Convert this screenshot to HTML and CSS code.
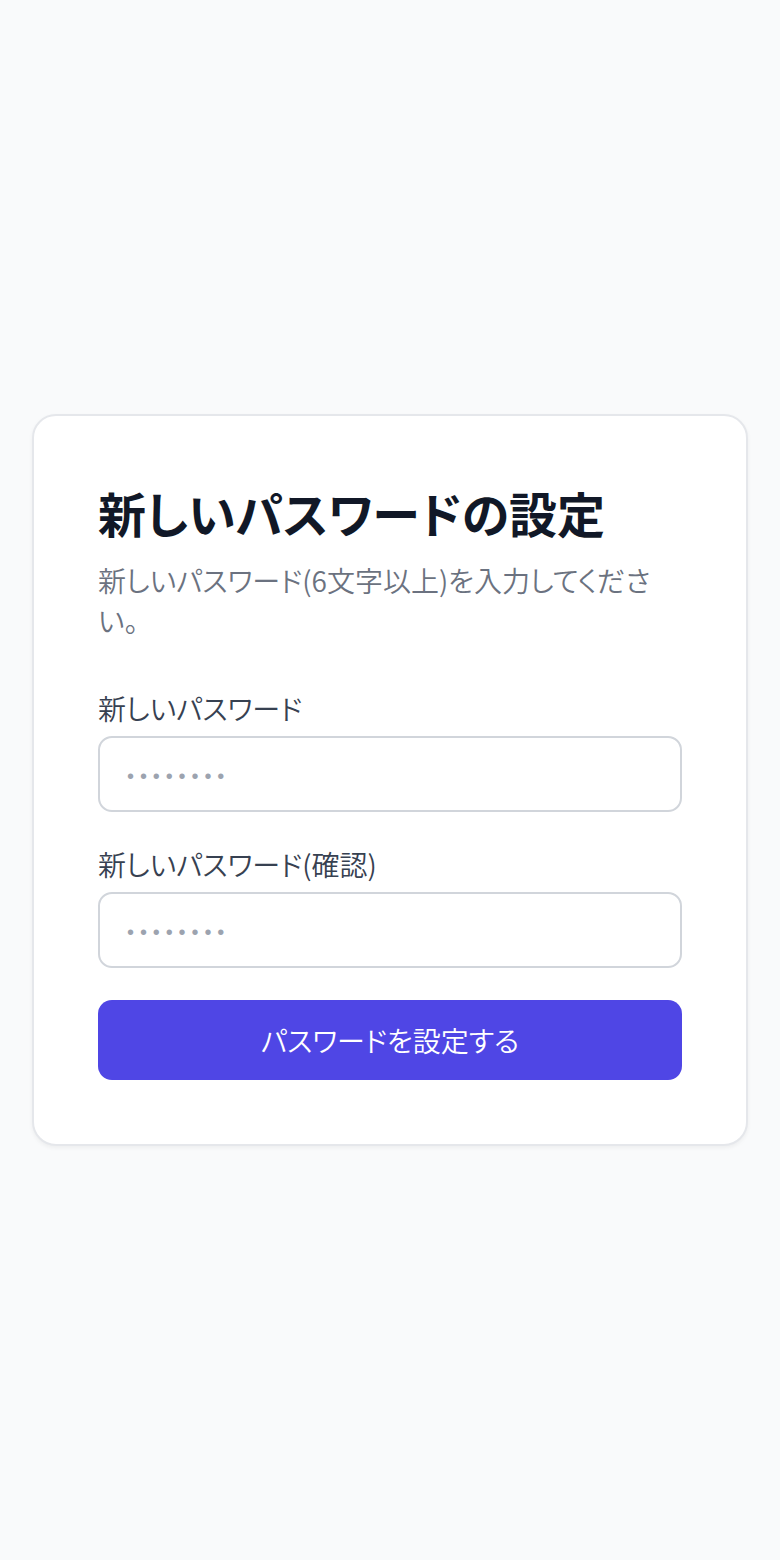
FILE: index.html
```html
<!DOCTYPE html>
<html lang="ja">
<head>
	<meta charset="utf-8">
	<title>新しいパスワードの設定</title>
	<link rel="stylesheet" href="styles.css">
</head>
<body>
<div class="page">
	<div class="card">
		<h1 class="title">新しいパスワードの設定</h1>
		<p class="lead">新しいパスワード(6文字以上)を入力してください。</p>

		<form class="form" onsubmit="return false;">
			<div class="field">
				<label class="label" for="pw">新しいパスワード</label>
				<input class="input" type="password" id="pw" placeholder="••••••••">
			</div>
			<div class="field">
				<label class="label" for="pw2">新しいパスワード(確認)</label>
				<input class="input" type="password" id="pw2" placeholder="••••••••">
			</div>
			<button class="submit" type="submit">パスワードを設定する</button>
		</form>
	</div>
</div>
</body>
</html>
```

FILE: styles.css
```css
* {
	box-sizing: border-box;
}
html, body {
	margin: 0;
	padding: 0;
}
body {
	background-color: #f9fafb;
	font-family: "Noto Sans CJK JP", "Noto Sans", sans-serif;
	font-feature-settings: "palt";
	color: #111827;
}
.page {
	min-height: 1560px;
	display: flex;
	align-items: center;
	justify-content: center;
	padding: 0 32px;
}
.card {
	width: 100%;
	background-color: #ffffff;
	border: 2px solid #e5e7eb;
	border-radius: 24px;
	box-shadow: 0 2px 4px rgba(0, 0, 0, 0.05);
	padding: 64px;
}
.title {
	margin: 0;
	font-size: 48px;
	line-height: 64px;
	font-weight: 700;
	color: #111827;
}
.lead {
	margin: 16px 0 48px;
	font-size: 28px;
	font-weight: 350;
	line-height: 40px;
	color: #6b7280;
}
.form {
	display: flex;
	flex-direction: column;
	gap: 32px;
}
.field {
	display: flex;
	flex-direction: column;
	gap: 8px;
}
.label {
	font-size: 28px;
	font-weight: 350;
	line-height: 40px;
	color: #374151;
}
.input {
	width: 100%;
	height: 76px;
	border: 2px solid #d1d5db;
	border-radius: 14px;
	padding: 16px 24px 16px 27px;
	font-family: "Liberation Sans", sans-serif;
	font-size: 28px;
	line-height: 40px;
	color: #111827;
	background: #ffffff;
	outline: none;
}
.input::placeholder {
	color: #9ca3af;
	font-size: 20px;
	letter-spacing: 5.9px;
}
.submit {
	width: 100%;
	height: 80px;
	border: none;
	border-radius: 14px;
	background-color: #4f46e5;
	color: #ffffff;
	font-family: "Noto Sans CJK JP", "Noto Sans", sans-serif;
	font-feature-settings: "palt";
	font-size: 28px;
	font-weight: 350;
	line-height: 40px;
	cursor: pointer;
}
```
